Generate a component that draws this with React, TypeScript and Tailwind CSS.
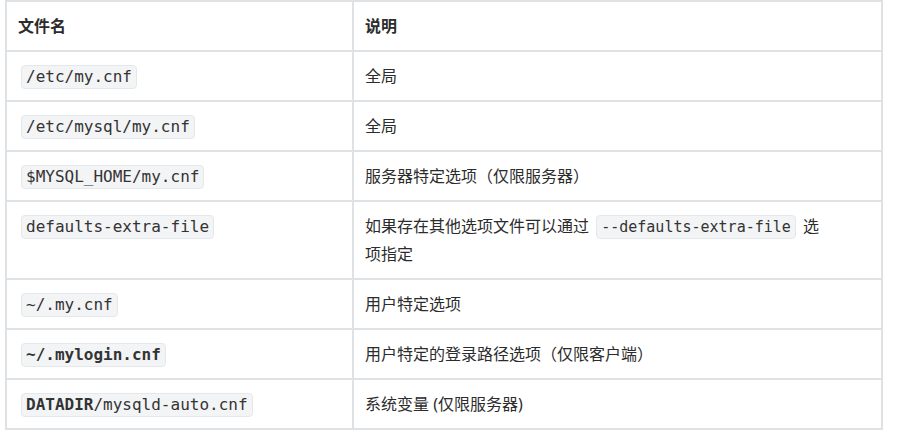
import React from 'react';

type Row = {
    file: React.ReactNode;
    desc: React.ReactNode;
};

function Code({ children, small }: { children: React.ReactNode; small?: boolean }) {
    return (
        <code
            className={`mx-[3px] inline-block rounded-[4px] border border-[#e5e8eb] bg-[#f3f4f5] px-[4px] leading-[22px] text-[#333] [font-family:'DejaVu_Sans_Mono',monospace] ${small ? 'text-[15px]' : 'text-[16px]'}`}
        >
            {children}
        </code>
    );
}

const rows: Row[] = [
    { file: <Code>/etc/my.cnf</Code>, desc: '全局' },
    { file: <Code>/etc/mysql/my.cnf</Code>, desc: '全局' },
    { file: <Code>$MYSQL_HOME/my.cnf</Code>, desc: '服务器特定选项（仅限服务器）' },
    {
        file: <Code>defaults-extra-file</Code>,
        desc: (
            <>
                如果存在其他选项文件可以通过 <Code small>--defaults-extra-file</Code> 选<br />
                项指定
            </>
        ),
    },
    { file: <Code>~/.my.cnf</Code>, desc: '用户特定选项' },
    { file: <Code><b>~/.mylogin.cnf</b></Code>, desc: '用户特定的登录路径选项（仅限客户端）' },
    {
        file: (
            <Code>
                <b>DATADIR</b>/mysqld-auto.cnf
            </Code>
        ),
        desc: '系统变量 (仅限服务器)',
    },
];

export default function App() {
    return (
        <div className="min-h-[440px] w-[904px] bg-white pl-[5px] text-[16px] leading-[28px] text-[#2c2c2c] [font-family:'Noto_Sans','Noto_Sans_CJK_SC',sans-serif]">
            <table className="w-[878px] table-fixed border-collapse">
                <colgroup>
                    <col className="w-[347px]" />
                    <col />
                </colgroup>
                <thead>
                    <tr>
                        <th className="border-2 border-[#dfe2e5] px-[11px] py-[10px] text-left font-bold">文件名</th>
                        <th className="border-2 border-[#dfe2e5] px-[11px] py-[10px] text-left font-bold">说明</th>
                    </tr>
                </thead>
                <tbody>
                    {rows.map((row, i) => (
                        <tr key={i}>
                            <td className="border-2 border-[#dfe2e5] px-[11px] py-[10px] align-top">{row.file}</td>
                            <td className="border-2 border-[#dfe2e5] px-[11px] py-[10px] align-top">{row.desc}</td>
                        </tr>
                    ))}
                </tbody>
            </table>
        </div>
    );
}
